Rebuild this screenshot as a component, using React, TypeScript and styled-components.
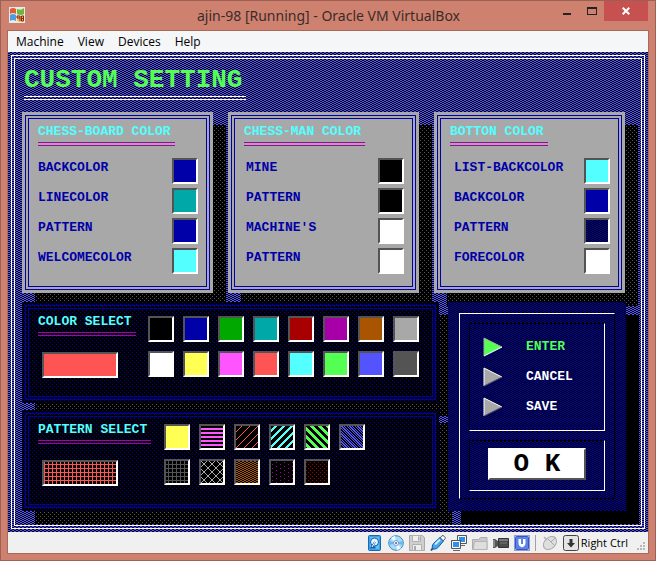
import React from 'react';
import styled, { createGlobalStyle, css } from 'styled-components';

const C = {
  black: '#000000', blue: '#0000a8', green: '#00a800', cyan: '#00a8a8',
  red: '#a80000', magenta: '#a800a8', brown: '#a85400', gray: '#a8a8a8',
  dark: '#545454', lblue: '#5454ff', lgreen: '#54ff54', lcyan: '#54ffff',
  lred: '#ff5454', lmagenta: '#ff54ff', yellow: '#ffff54', white: '#ffffff',
};

// 8x8 fill patterns, one byte per row
const FILLS = {
  line: [0xff, 0xff, 0, 0, 0xff, 0xff, 0, 0],
  lightSlash: [1, 2, 4, 8, 0x10, 0x20, 0x40, 0x80],
  slash: [0xe0, 0xc1, 0x83, 7, 0x0e, 0x1c, 0x38, 0x70],
  backSlash: [0xf0, 0x78, 0x3c, 0x1e, 0x0f, 0x87, 0xc3, 0xe1],
  lightBackSlash: [0xa5, 0xd2, 0x69, 0xb4, 0x5a, 0x2d, 0x96, 0x4b],
  hatch: [0xff, 0x88, 0x88, 0x88, 0xff, 0x88, 0x88, 0x88],
  crossHatch: [0x81, 0x42, 0x24, 0x18, 0x18, 0x24, 0x42, 0x81],
  interleave: [0xcc, 0x33, 0xcc, 0x33, 0xcc, 0x33, 0xcc, 0x33],
  wideDot: [0x80, 0, 8, 0, 0x80, 0, 8, 0],
  closeDot: [0x88, 0, 0x22, 0, 0x88, 0, 0x22, 0],
};
type Fill = keyof typeof FILLS;

const fill = (name: Fill, color: string) => {
  let d = '';
  FILLS[name].forEach((row, y) => {
    for (let x = 0; x < 8; x++) if (row & (0x80 >> x)) d += `M${x} ${y}h1v1h-1z`;
  });
  const svg = `<svg xmlns='http://www.w3.org/2000/svg' width='8' height='8' shape-rendering='crispEdges'><path fill='${color}' d='${d}'/></svg>`;
  return `#000 url("data:image/svg+xml,${encodeURIComponent(svg).replace(/'/g, '%27')}") 0 4px / 8px 8px fixed`;
};

const GlobalStyle = createGlobalStyle`
  * { box-sizing: border-box; }
  html, body { margin: 0; background: #ce816f; }
  button { font: inherit; color: inherit; border: 0; padding: 0; margin: 0; background: none; border-radius: 0; }
  ul { list-style: none; margin: 0; padding: 0; }
  svg { display: block; }
`;

const Window = styled.div`
  min-height: 100vh;
  border: 1px solid #9c6154;
  padding: 0 6px 6px;
  background: #ce816f;
  font-family: 'Open Sans', 'Noto Sans', sans-serif;
`;

const TitleBar = styled.header`
  display: grid;
  grid-template-columns: 94px 1fr 94px;
  height: 29px;
  padding: 0 1px 0 2px;
`;
const AppIcon = styled.div`padding-top: 6px;`;
const Title = styled.h1`
  margin: 0;
  font-family: 'Noto Sans', sans-serif;
  font-size: 14px;
  font-weight: 400;
  line-height: 29px;
  text-align: center;
  white-space: nowrap;
  color: #3b2c2a;
`;
const WindowButtons = styled.div`
  display: flex;
  justify-content: flex-end;
  align-items: flex-start;
`;
const WindowButton = styled.button<{ $close?: boolean }>`
  display: flex;
  align-items: center;
  justify-content: center;
  width: ${p => (p.$close ? 45 : 26)}px;
  height: 20px;
  background: ${p => (p.$close ? '#c75050' : 'transparent')};
`;

const Client = styled.div`border: 1px solid #a8685a;`;

const MenuBar = styled.nav`
  display: flex;
  gap: 14px;
  height: 21px;
  padding: 0 8px;
  background: #f4f6f8;
  font-size: 12px;
  line-height: 20px;
  color: #000;
`;

const Screen = styled.main`
  isolation: isolate;
  padding: 6px;
  background: ${fill('interleave', C.lblue)};
  font-family: 'Liberation Mono', monospace;
  font-weight: 700;
  font-size: 13px;
  line-height: 14px;
`;
const ScreenFrame = styled.div`
  border: 1px solid #fff;
  outline: 1px solid #fff;
  outline-offset: 2px;
  padding: 0 15px 14px 7px;
`;
const Heading = styled.h2`
  width: fit-content;
  margin: 0 0 12px 2px;
  padding-top: 5px;
  font-size: 26px;
  line-height: 32px;
  color: ${C.lgreen};
  & > span { display: block; padding-right: 4px; }
`;
const DoubleRule = styled.div<{ $color: string }>`
  height: 4px;
  border: solid ${p => p.$color};
  border-width: 1px 0;
`;

const shadow = css`
  position: relative;
  &::before {
    content: '';
    position: absolute;
    z-index: -1;
    inset: 13px -13px -13px 13px;
  }
`;

const TopPanels = styled.div`
  display: grid;
  grid-template-columns: repeat(3, 1fr);
  gap: 15px;
  padding-right: 1px;
`;
const BottomPanels = styled.div`
  display: grid;
  grid-template-columns: 1fr 178px;
  gap: 9px;
  margin-top: 9px;
`;
const SelectColumn = styled.div`
  display: flex;
  flex-direction: column;
  gap: 7px;
`;
const Panel = styled.section<{ $raised?: boolean }>`
  ${shadow}
  padding: 6px;
  background: ${p => (p.$raised ? C.gray : fill('closeDot', C.blue))};
  &::before { background: ${fill('closeDot', C.dark)}; }
`;
const Frame = styled.div`
  border: 1px solid ${C.blue};
  outline: 1px solid ${C.blue};
  outline-offset: 2px;
  padding: 6px 8px 12px 9px;
`;
const SelectFrame = styled(Frame)`
  display: flex;
  padding-bottom: 18px;
`;
const PanelTitle = styled.h3`
  width: fit-content;
  margin: 0;
  font-size: 13px;
  line-height: 14px;
  white-space: nowrap;
  color: ${C.lcyan};
  & > span { display: block; padding-right: 4px; margin-bottom: 3px; }
`;
const Settings = styled.ul<{ $indent: number }>`
  display: grid;
  gap: 4px;
  margin-top: 12px;
  padding-left: ${p => p.$indent}px;
  color: ${C.blue};
`;
const Setting = styled.li`
  display: flex;
  justify-content: space-between;
  line-height: 20px;
`;
const Swatch = styled.button<{ $color: string; $fill?: Fill; $wide?: boolean }>`
  display: block;
  flex: none;
  width: ${p => (p.$wide ? 76 : 26)}px;
  height: 26px;
  border: 2px solid;
  border-color: ${C.dark} #fff #fff ${C.dark};
  background: ${p => (p.$fill ? fill(p.$fill, p.$color) : p.$color)};
  background-clip: padding-box;
`;
const SelectInfo = styled.div<{ $wide?: boolean }>`
  width: ${p => (p.$wide ? 126 : 110)}px;
`;
const Current = styled.div`margin: 16px 0 0 4px;`;
const Palette = styled.div<{ $columns: number }>`
  display: grid;
  grid-template-columns: repeat(${p => p.$columns}, 26px);
  gap: 9px;
  align-content: start;
  padding-top: 1px;
`;

const ActionPanel = styled.section`
  ${shadow}
  padding: 11px 11px 12px;
  background: ${fill('interleave', C.blue)};
  &::before { background: #000; }
`;
const Raised = styled.div`
  display: flex;
  flex-direction: column;
  gap: 9px;
  padding: 9px 9px 7px;
  border: 1px solid;
  border-color: #fff #000 #000 #fff;
`;
const Sunken = styled.div<{ $ok?: boolean }>`
  padding: ${p => (p.$ok ? '7px 18px 10px' : '13px')};
  border: 1px solid;
  border-color: #000 #fff #fff #000;
`;
const Actions = styled(Sunken)`
  display: grid;
  gap: 10px;
`;
const Action = styled.button<{ $active?: boolean }>`
  display: flex;
  align-items: center;
  gap: 23px;
  height: 20px;
  color: ${p => (p.$active ? C.lgreen : '#fff')};
`;
const OkButton = styled.button`
  display: block;
  width: 100%;
  height: 32px;
  border: 2px solid;
  border-color: #fff ${C.dark} ${C.dark} #fff;
  background: #fff;
  color: #000;
  font-size: 26px;
  line-height: 28px;
`;

const StatusBar = styled.footer`
  display: flex;
  align-items: center;
  justify-content: flex-end;
  gap: 5px;
  height: 21px;
  padding-right: 2px;
  background: #f0f0f0;
  color: #000;
`;
const StatusDivider = styled.div`
  width: 1px;
  height: 16px;
  margin: 0 1px 0 0;
  background: #a0a0a0;
`;
const HostKey = styled.div`
  display: flex;
  align-items: center;
  gap: 2px;
  font-size: 11px;
  line-height: 20px;
`;
const Grip = styled.div`align-self: flex-end; padding: 0 0 2px 3px;`;

const Arrow = ({ active }: { active?: boolean }) => (
  <svg width="20" height="20" viewBox="0 0 20 20">
    <path d="M1 1 19 10 1 19z" fill={active ? C.lgreen : C.gray} />
    <path d="M1 19V1L19 10" fill="none" stroke={active ? C.gray : '#fff'} />
    {active
      ? <path d="M1 19 19 10" stroke="#fff" />
      : <path d="M1 19 19 10" stroke={C.dark} />}
  </svg>
);

const Icon = ({ children }: { children: React.ReactNode }) => (
  <svg width="16" height="16" viewBox="0 0 16 16">{children}</svg>
);

const StatusIcons = () => (
  <>
    <Icon>
      <rect x="1.5" y=".5" width="12" height="15" rx="1" fill="#3aa0e8" stroke="#1769b5" />
      <path d="M3 2h9v12H3z" fill="#62bdf5" />
      <circle cx="7.5" cy="7" r="4" fill="#e6f6ff" stroke="#0f5ca8" />
      <path d="M8 7 4.5 12.5h4" fill="none" stroke="#0f5ca8" strokeWidth="2" />
      <path d="m8 7-3 5" stroke="#fff" />
    </Icon>
    <Icon>
      <circle cx="8" cy="8" r="7.3" fill="#a5dcfa" stroke="#4388ba" />
      <path d="M8 8 3 3a7 7 0 0 1 4-2zM8 8l5 5a7 7 0 0 1-4 2z" fill="#effaff" />
      <path d="m8 8 6.5-2a7 7 0 0 1 0 4zM8 8l-6.500 2a7 7 0 0 1 0-4z" fill="#65b9f0" />
      <circle cx="8" cy="8" r="2.500" fill="#fff" stroke="#8291cb" />
      <circle cx="8" cy="8" r="1" fill="#3667a7" />
    </Icon>
    <Icon>
      <path d="M.5.5h13l2 2v13H.5z" fill="#cfcfcf" stroke="#aaa" />
      <path d="M3.500.5h8v6h-8zM3.500 9.500h9v6h-9z" fill="#efefef" stroke="#b2b2b2" />
      <path d="M9 1.500h1.500v4H9zM5 11h2v4H5z" fill="#aaa" />
    </Icon>
    <Icon>
      <path d="m10 3 2-2.300c1-.8 4 1.500 3.200 3L13 6z" fill="#fff" stroke="#555" />
      <path d="M10 2.500 13.500 6 8 12.500c-2 2-4 1.500-5.500 1.500C2 12 2 10 4 8z" fill="#48a8ee" stroke="#175b9e" />
      <path d="m10 4.500-5 5" stroke="#c7efff" strokeWidth="2" />
      <path d="m3 13-2 2.500" stroke="#175b9e" strokeWidth="2" />
    </Icon>
    <Icon>
      <path d="M6.500.5h9v8h-9z" fill="#2586df" stroke="#555" />
      <path d="M7.500 1.500h7v6h-7z" fill="#2b8ff0" stroke="#fff" />
      <path d="M9 10.500h5M2 15.500h7" stroke="#666" />
      <path d="M.5 5.500h9v8h-9z" fill="#2586df" stroke="#555" />
      <path d="M1.500 6.500h7v6h-7z" fill="#2b8ff0" stroke="#fff" />
    </Icon>
    <Icon>
      <path d="M.5 14.500v-10h6l2-2h6.500v12z" fill="#c9c9c9" stroke="#adadad" />
      <path d="M1 14.500 2.500 6.500H15v8z" fill="#dedede" stroke="#b5b5b5" />
    </Icon>
    <Icon>
      <path d="M0 4h2l3 2v5l-3 2H0z" fill="#555" />
      <path d="M1 5v7" stroke="#bbb" />
      <path d="M5.500 3.500h10v9h-10z" fill="#4c4c4c" stroke="#333" />
      <path d="M6 5h9" stroke="#aaa" /><path d="M7 8h7" stroke="#777" />
    </Icon>
    <Icon>
      <rect x=".5" y=".5" width="15" height="15" fill="none" stroke="#2848b8" strokeDasharray="1 1" />
      <rect x="1.500" y="1.500" width="13" height="13" rx="1" fill="#5c82e6" stroke="#3454c5" />
      <path d="M4.500 4h7v4c0 5.500-7 5.500-7 0z" fill="#fff" />
      <path d="M7 4h2v5H7z" fill="#5c82e6" />
    </Icon>
    <StatusDivider />
    <Icon>
      <ellipse cx="8" cy="8" rx="5.500" ry="7.500" transform="rotate(45 8 8)" fill="#dedede" stroke="#aaa" />
      <path d="m6 4 6 6M9 7l4-4" stroke="#aaa" />
      <path d="m2 2 3 3" stroke="#b4b4b4" strokeWidth="1.500" />
    </Icon>
  </>
);

type Item = [label: string, color: string, fill?: Fill];

const SETTINGS: { title: string; indent: number; items: Item[] }[] = [
  { title: 'CHESS-BOARD COLOR', indent: 0, items: [['BACKCOLOR', C.blue], ['LINECOLOR', C.cyan], ['PATTERN', C.blue], ['WELCOMECOLOR', C.lcyan]] },
  { title: 'CHESS-MAN COLOR', indent: 2, items: [['MINE', C.black], ['PATTERN', C.black], ["MACHINE'S", C.white], ['PATTERN', C.white]] },
  { title: 'BOTTON COLOR', indent: 4, items: [['LIST-BACKCOLOR', C.lcyan], ['BACKCOLOR', C.blue], ['PATTERN', C.blue, 'interleave'], ['FORECOLOR', C.white]] },
];

const COLORS: Item[] = [
  ['Black', C.black], ['Blue', C.blue], ['Green', C.green], ['Cyan', C.cyan],
  ['Red', C.red], ['Magenta', C.magenta], ['Brown', C.brown], ['Light gray', C.gray],
  ['White', C.white], ['Yellow', C.yellow], ['Light magenta', C.lmagenta], ['Light red', C.lred],
  ['Light cyan', C.lcyan], ['Light green', C.lgreen], ['Light blue', C.lblue], ['Dark gray', C.dark],
];

const PATTERNS: Item[] = [
  ['Solid', C.yellow], ['Lines', C.lmagenta, 'line'], ['Light slash', C.lred, 'lightSlash'],
  ['Slash', C.lcyan, 'slash'], ['Backslash', C.lgreen, 'backSlash'], ['Light backslash', C.lblue, 'lightBackSlash'],
  ['Hatch', C.dark, 'hatch'], ['Cross hatch', C.gray, 'crossHatch'], ['Interleave', C.brown, 'interleave'],
  ['Wide dots', C.magenta, 'wideDot'], ['Close dots', C.red, 'closeDot'],
];

function RuledTitle({ children }: { children: React.ReactNode }) {
  return (
    <PanelTitle>
      <span>{children}</span>
      <DoubleRule $color={C.magenta} />
    </PanelTitle>
  );
}

function Selector({ title, items, columns, current, wide }: {
  title: string; items: Item[]; columns: number; current: Item; wide?: boolean;
}) {
  return (
    <Panel>
      <SelectFrame>
        <SelectInfo $wide={wide}>
          <RuledTitle>{title}</RuledTitle>
          <Current><Swatch $wide $color={current[1]} $fill={current[2]} aria-label={current[0]} /></Current>
        </SelectInfo>
        <Palette $columns={columns}>
          {items.map(([name, color, f]) => <Swatch key={name} $color={color} $fill={f} aria-label={name} />)}
        </Palette>
      </SelectFrame>
    </Panel>
  );
}

export default function App() {
  return (
    <>
      <GlobalStyle />
      <Window>
        <TitleBar>
          <AppIcon>
            <Icon>
              <rect width="16" height="16" fill="#e8ece7" />
              <path d="M1 2q3-2 6 0v5Q4 5 1 7z" fill="#e45a32" />
              <path d="M8 2q4 2 7-1v6q-3 2-7 0z" fill="#69b83c" />
              <path d="M1 8q3-2 6 0v6q-3-2-6 0z" fill="#4b9de4" />
              <path d="M8 8q4 2 7 0v6q-3 2-7 0z" fill="#f3c744" />
              <path d="M8 9h3v5M8 9v2h3M12.500 9h2v5h-2zM12.500 11.500h2" fill="none" stroke="#8d2026" />
            </Icon>
          </AppIcon>
          <Title>ajin-98 [Running] - Oracle VM VirtualBox</Title>
          <WindowButtons>
            <WindowButton aria-label="Minimize">
              <svg width="8" height="10"><path d="M0 7h8v2H0z" fill="#222" /></svg>
            </WindowButton>
            <WindowButton aria-label="Maximize">
              <svg width="10" height="8"><path d="M0 0h10v8H0zM1 2v5h8V2z" fill="#222" fillRule="evenodd" /></svg>
            </WindowButton>
            <WindowButton $close aria-label="Close">
              <svg width="8" height="8"><path d="m.7.7 6.600 6.600M7.300.7.7 7.300" stroke="#fff" strokeWidth="2" /></svg>
            </WindowButton>
          </WindowButtons>
        </TitleBar>
        <Client>
          <MenuBar>
            <button>Machine</button><button>View</button><button>Devices</button><button>Help</button>
          </MenuBar>
          <Screen>
            <ScreenFrame>
              <Heading><span>CUSTOM SETTING</span><DoubleRule $color="#fff" /></Heading>
              <TopPanels>
                {SETTINGS.map(group => (
                  <Panel $raised key={group.title}>
                    <Frame>
                      <RuledTitle>{group.title}</RuledTitle>
                      <Settings $indent={group.indent}>
                        {group.items.map(([name, color, f], i) => (
                          <Setting key={i}>
                            <span>{name}</span>
                            <Swatch $color={color} $fill={f} aria-label={name} />
                          </Setting>
                        ))}
                      </Settings>
                    </Frame>
                  </Panel>
                ))}
              </TopPanels>
              <BottomPanels>
                <SelectColumn>
                  <Selector title="COLOR SELECT" items={COLORS} columns={8} current={['Current color', C.lred]} />
                  <Selector title="PATTERN SELECT" items={PATTERNS} columns={6} current={['Current pattern', C.lred, 'hatch']} wide />
                </SelectColumn>
                <ActionPanel>
                  <Raised>
                    <Actions>
                      <Action $active><Arrow active />ENTER</Action>
                      <Action><Arrow />CANCEL</Action>
                      <Action><Arrow />SAVE</Action>
                    </Actions>
                    <Sunken $ok><OkButton>O K</OkButton></Sunken>
                  </Raised>
                </ActionPanel>
              </BottomPanels>
            </ScreenFrame>
          </Screen>
          <StatusBar>
            <StatusIcons />
            <HostKey>
              <Icon>
                <rect x=".5" y=".5" width="15" height="15" rx="2" fill="#e4e4e4" stroke="#444" />
                <path d="M6.500 4h3v4H12l-4 4.500L4 8h2.500z" fill="#333" />
              </Icon>
              Right Ctrl
            </HostKey>
            <Grip>
              <svg width="10" height="9"><path d="M7 0h2v2H7zM4 3h2v2H4zM7 3h2v2H7zM1 6h2v2H1zM4 6h2v2H4zM7 6h2v2H7z" fill="#b8b8b8" /></svg>
            </Grip>
          </StatusBar>
        </Client>
      </Window>
    </>
  );
}
